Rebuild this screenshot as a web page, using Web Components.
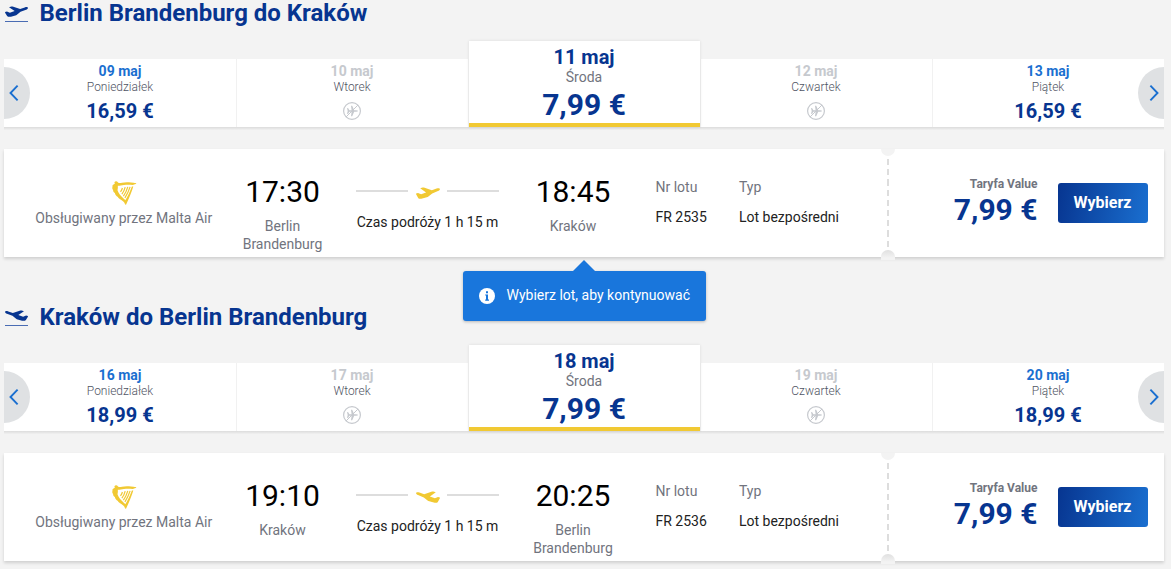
<!DOCTYPE html>
<html lang="pl">
<head>
<meta charset="utf-8">
<title>Wybór lotów</title>
<style>
html,body{margin:0;height:100%;overflow:hidden;background:#f3f3f3}
body{font-family:Roboto,"Open Sans",sans-serif;color:#000}
</style>
</head>
<body>
<flight-page></flight-page>
<script>
const define = (name, html) => customElements.define(name, class extends HTMLElement {
  constructor() { super(); this.attachShadow({mode: 'open'}); }
  connectedCallback() {
    const t = document.createElement('template');
    t.innerHTML = typeof html === 'function' ? html(this) : html;
    this.shadowRoot.replaceChildren(t.content.cloneNode(true));
  }
});

define('plane-icon', `
<style>:host{display:block;width:24px;height:12px}:host([landing]){transform:scaleX(-1)}svg{display:block;width:100%;height:100%}</style>
<svg viewBox="0 0 24 12" preserveAspectRatio="none"><path fill="currentColor" d="M.1 6.6 2 6 5.1 7.3 10.1 5.4 4.2 1.3 6.6.5C7 .4 7.4.4 7.9.6L15.8 3.3 20.6 1.5C22.6.8 23.8 1.2 23.9 2.1 24 3 23 3.7 22 4.1L16.2 6.4 12.4 9.5C12 9.8 11.4 10.1 10.8 10.3L6.2 11.6C4.6 12 3 12 2.2 10.9L.1 7.3Z"/></svg>`);

define('harp-logo', `
<style>:host{display:block;width:26px;height:26px;color:#f1c933}svg{display:block}</style>
<svg width="26" height="26" viewBox="0 0 26 26"><g fill="currentColor">
<path d="M3.4 2.2C4 .8 6.2.8 6.8 2.2 7.7 3.3 9 3.3 11 2.8 14.5 1.9 18.5 2.1 25.3 3.2L25 4.1C23.3 4 23.1 5 21.8 5 19 4.7 16.5 4.4 13 4.9 10.4 5.3 8.3 6 6.8 5.8 7 7.4 6.9 8.8 6.5 10.3 7.3 13 9.6 16 12.8 18.8L14.8 20.6 14.9 25 13.8 23.8C13.5 22.1 11.5 21.2 9.6 19.6 9 19 7.4 18.2 6.9 16.9 5.3 16 4.1 14.6 3.9 12.9 2.7 12.2 2 11.3 2.1 9.9 1.2 9 1 7.6 1.6 6.7 1.1 6.1 1.4 5.1 2.5 4.4L3.8 3.7Z"/>
<path d="M20.9 6.6 22.3 6.6C21 11 18.8 17 14.9 25L13.6 21.5C16.6 16.6 19.2 11.3 20.9 6.6Z"/></g>
<g fill="none" stroke="currentColor" stroke-width="1.2"><path d="M11.4 8Q11 9.8 9.5 11.8M14.2 7.2Q13.2 11.2 10.9 14.2M16.8 6.9Q15.3 12 12.4 16.2M19.1 6.9Q17.1 13 13.9 17.8"/></g></svg>`);

define('no-flight', `
<style>:host{display:block;width:18px;height:18px;color:#c6c9ce}svg{display:block}</style>
<svg width="18" height="18" viewBox="0 0 18 18"><circle cx="9" cy="9" r="8.4" fill="none" stroke="currentColor" stroke-width="1.2"/>
<path fill="currentColor" d="M4 6 5.2 6.2 6.4 8.2 8.6 8.2 8 3.8 9.2 3.8 11.2 8.2 13 8.2Q15 8.4 15 9 15 9.6 13 9.8L11.2 9.8 9.2 14.2 8 14.2 8.6 9.8 6.4 9.8 5.2 11.8 4 12 4.7 9Z"/>
<path d="M3 15 15 3" stroke="currentColor" stroke-width="1"/></svg>`);

define('route-title', el => `
<style>
:host{display:flex;height:26px;gap:11.5px;align-items:center;padding-left:4px;color:#073590}
.i{width:23px;height:17px;border-bottom:1px solid #4a6cb3;margin-bottom:-1px;margin-left:1px;box-sizing:border-box}
plane-icon{width:23px;height:11px;margin-top:1px}
h2{margin:0;font-size:24px;line-height:26px;font-weight:700}
</style><div class="i"><plane-icon ${el.hasAttribute('landing') ? 'landing' : ''}></plane-icon></div><h2><slot></slot></h2>`);

define('day-card', el => `
<style>
:host{display:flex;flex-direction:column;align-items:center;box-sizing:border-box;height:68px;background:#fff;border-left:1px solid #f1f1f1;padding:4px 1px 0 0}
:host(:first-child){border-left:0;padding-right:0}
:host([selected]){height:86px;border-left:0;margin-left:1px;border-bottom:4px solid #f1c933;box-shadow:0 0 3px rgba(0,0,0,.1);position:relative;padding-top:5px}
.d{font-size:14px;line-height:16px;font-weight:700;color:#1a6fd0}
.w{font-size:12px;line-height:16px;font-weight:300;color:#4f5463}
.p{font-size:20px;line-height:24px;font-weight:700;color:#073590;margin-top:4px}
:host([off]) .d{color:#c6c9ce}
:host([selected]) .d{font-size:20px;line-height:22px;color:#073590}
:host([selected]) .w{font-size:14px;line-height:18px;font-weight:400;color:#71747e}
:host([selected]) .p{font-size:30px;line-height:34px;margin-top:2px}
no-flight{margin-top:7px}
</style><div class="d">${el.getAttribute('date')}</div><div class="w">${el.getAttribute('day')}</div>${el.hasAttribute('off') ? '<no-flight></no-flight>' : `<div class="p">${el.getAttribute('price')}</div>`}`);

define('carousel-arrow', `
<style>:host{display:flex;position:absolute;bottom:8px;left:0;width:26px;height:52px;background:#dfe1e3;border-radius:0 26px 26px 0;align-items:center;justify-content:center;z-index:2}
:host([next]){left:auto;right:0;transform:scaleX(-1)}svg{margin-right:6px}</style>
<svg width="10" height="16" viewBox="0 0 10 16"><path d="M8.6 .7 1.5 8 8.6 15.3" fill="none" stroke="#1a6fd0" stroke-width="1.9"/></svg>`);

define('day-carousel', `
<style>:host{display:block;position:relative;width:1160px;height:86px;margin:15px 0 0 4px}
.row{display:grid;grid-template-columns:repeat(5,232px);align-items:end;height:86px}
.line{position:absolute;left:0;right:0;bottom:-3px;height:3px;background:linear-gradient(#dcdcdc,#e6e6e6 50%,#f1f1f1)}</style>
<div class="line"></div><carousel-arrow></carousel-arrow><div class="row"><slot></slot></div><carousel-arrow next></carousel-arrow>`);

define('select-button', `
<style>:host{display:flex;width:90px;height:40px;border-radius:3px;background:linear-gradient(100deg,#073590,#1a6fd0);color:#fff;font-weight:700;font-size:16px;align-items:center;justify-content:center;padding:0 1px 1px 0;box-sizing:border-box}</style><slot></slot>`);

define('flight-ticket', el => {
  const a = n => el.getAttribute(n);
  return `
<style>
:host{display:grid;grid-template-columns:239.5px 78px 34.5px 143px 35px 78px 43.5px 83.5px 142px 8px 1fr;width:1160px;height:108px;margin:22px 0 0 4px;background:#fff;box-shadow:0 2px 3px rgba(0,0,0,.15);position:relative}
.g{color:#71747e}
.op{display:flex;flex-direction:column;align-items:center;padding-top:31px;font-size:14px;line-height:20px;color:#71747e;white-space:nowrap}
harp-logo{margin-bottom:2px}
.t{display:flex;flex-direction:column;align-items:center;text-align:center;padding-top:24px}
.t b{font-size:30px;line-height:37px;font-weight:400}
.t span{font-size:14px;line-height:18px;color:#71747e;margin-top:7px}
.path{display:flex;align-items:center;justify-content:space-between;height:12px;margin-top:38px;color:#f1c933}
.path i{width:52px;height:2px;background:#ddd;margin-top:-4px}
.dur{font-size:14px;line-height:20px;text-align:center;white-space:nowrap;margin-top:13px;font-weight:400;color:#222}
.c{font-size:14px;line-height:20px;padding-top:28px;white-space:nowrap;color:#222}
.c div+div{margin-top:10px}
.perf{width:2px;height:88px;margin-top:10px;background:repeating-linear-gradient(#ddd 0 6.2px,transparent 6.2px 10.2px);justify-self:end}
.n{position:absolute;left:877px;width:14px;height:7px;background:#f3f3f3}
.n.a{top:0;border-radius:0 0 7px 7px}
.n.b{bottom:-3px;height:10px;border-radius:7px 7px 0 0;background:linear-gradient(#e0e0e0,#f3f3f3 8px)}
.buy{display:flex;justify-content:flex-end;align-items:center;gap:20.5px;padding-right:16px}
.f{display:flex;flex-direction:column;align-items:flex-end;margin-top:-2px}
.f small{font-size:12px;line-height:16px;font-weight:700;color:#71747e}
.f strong{font-size:30px;line-height:36px;font-weight:700;color:#073590}
</style>
<div class="op"><harp-logo></harp-logo><span>Obsługiwany przez Malta Air</span></div>
<div class="t"><b>${a('dep')}</b><span>${a('from')}</span></div><div></div>
<div><div class="path"><i></i><plane-icon ${el.hasAttribute('landing') ? 'landing' : ''}></plane-icon><i></i></div><div class="dur">Czas podróży 1 h 15 m</div></div><div></div>
<div class="t"><b>${a('arr')}</b><span>${a('to')}</span></div><div></div>
<div class="c"><div class="g">Nr lotu</div><div>${a('number')}</div></div>
<div class="c"><div class="g">Typ</div><div>Lot bezpośredni</div></div>
<div class="perf"></div>
<div class="buy"><div class="f"><small>Taryfa Value</small><strong>7,99 €</strong></div><select-button>Wybierz</select-button></div>
<div class="n a"></div><div class="n b"></div>`;
});

define('hint-bubble', `
<style>:host{display:flex;position:absolute;left:463px;top:271px;width:243px;height:50px;box-sizing:border-box;background:#1976dc;border-radius:3px;box-shadow:0 1px 3px rgba(0,0,0,.25);color:#fff;align-items:center;gap:11.5px;padding:0 16px;font-size:14px;font-weight:400;white-space:nowrap}
.tip{position:absolute;left:110px;top:-11px;width:22px;height:11px;background:#1976dc;clip-path:polygon(50% 0,100% 100%,0 100%)}
svg{flex:none}span{margin-top:-2px}</style>
<div class="tip"></div>
<svg width="16" height="16" viewBox="0 0 16 16"><circle cx="8" cy="8" r="8" fill="#fff"/><path d="M7 3.2h2v2H7zM6.2 6.4H9v5.1h1v1.2H6.2v-1.2H7V7.6h-.8z" fill="#1976dc"/></svg><span><slot></slot></span>`);

define('flight-leg', `<style>:host{display:flex;flex-direction:column;height:304px}</style><slot></slot>`);

define('flight-page', `
<style>:host{display:block;width:1171px;height:569px;overflow:hidden;position:relative}</style>
<flight-leg>
<route-title>Berlin Brandenburg do Kraków</route-title>
<day-carousel>
<day-card date="09 maj" day="Poniedziałek" price="16,59 €"></day-card><day-card off date="10 maj" day="Wtorek"></day-card><day-card selected date="11 maj" day="Środa" price="7,99 €"></day-card><day-card off date="12 maj" day="Czwartek"></day-card><day-card date="13 maj" day="Piątek" price="16,59 €"></day-card>
</day-carousel>
<flight-ticket dep="17:30" arr="18:45" from="Berlin Brandenburg" to="Kraków" number="FR 2535"></flight-ticket>
</flight-leg>
<flight-leg>
<route-title landing>Kraków do Berlin Brandenburg</route-title>
<day-carousel>
<day-card date="16 maj" day="Poniedziałek" price="18,99 €"></day-card><day-card off date="17 maj" day="Wtorek"></day-card><day-card selected date="18 maj" day="Środa" price="7,99 €"></day-card><day-card off date="19 maj" day="Czwartek"></day-card><day-card date="20 maj" day="Piątek" price="18,99 €"></day-card>
</day-carousel>
<flight-ticket landing dep="19:10" arr="20:25" from="Kraków" to="Berlin Brandenburg" number="FR 2536"></flight-ticket>
</flight-leg>
<hint-bubble>Wybierz lot, aby kontynuować</hint-bubble>`);
</script>
</body>
</html>
